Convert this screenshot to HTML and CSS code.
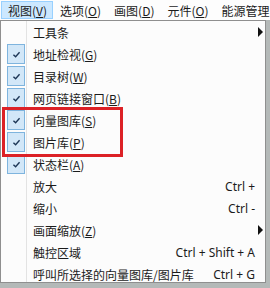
FILE: index.html
```html
<!DOCTYPE html>
<html lang="zh-CN">
<head>
    <meta charset="UTF-8">
    <title>视图菜单</title>
    <link rel="stylesheet" href="styles.css">
</head>
<body>
    <div class="menubar">
        <div class="menu-item active">视图(<u>V</u>)</div>
        <div class="menu-item">选项(<u>O</u>)</div>
        <div class="menu-item">画图(<u>D</u>)</div>
        <div class="menu-item">元件(<u>O</u>)</div>
        <div class="menu-item">能源管理</div>
    </div>
    <div class="dropdown">
        <div class="row"><span class="check"></span><span class="label">工具条</span><span class="arrow"></span></div>
        <div class="row"><span class="check on"><svg viewBox="0 0 10 8"><path d="M1.5 4.2 L4 6.5 L8.5 1.5" /></svg></span><span class="label">地址检视(<u>G</u>)</span></div>
        <div class="row"><span class="check on"><svg viewBox="0 0 10 8"><path d="M1.5 4.2 L4 6.5 L8.5 1.5" /></svg></span><span class="label">目录树(<u>W</u>)</span></div>
        <div class="row"><span class="check on"><svg viewBox="0 0 10 8"><path d="M1.5 4.2 L4 6.5 L8.5 1.5" /></svg></span><span class="label">网页链接窗口(<u>B</u>)</span></div>
        <div class="row"><span class="check on"><svg viewBox="0 0 10 8"><path d="M1.5 4.2 L4 6.5 L8.5 1.5" /></svg></span><span class="label">向量图库(<u>S</u>)</span></div>
        <div class="row"><span class="check on"><svg viewBox="0 0 10 8"><path d="M1.5 4.2 L4 6.5 L8.5 1.5" /></svg></span><span class="label">图片库(<u>P</u>)</span></div>
        <div class="row"><span class="check on"><svg viewBox="0 0 10 8"><path d="M1.5 4.2 L4 6.5 L8.5 1.5" /></svg></span><span class="label">状态栏(<u>A</u>)</span></div>
        <div class="row"><span class="check"></span><span class="label">放大</span><span class="key">Ctrl +</span></div>
        <div class="row"><span class="check"></span><span class="label">缩小</span><span class="key">Ctrl -</span></div>
        <div class="row"><span class="check"></span><span class="label">画面缩放(<u>Z</u>)</span><span class="arrow"></span></div>
        <div class="row"><span class="check"></span><span class="label">触控区域</span><span class="key">Ctrl + Shift + A</span></div>
        <div class="row"><span class="check"></span><span class="label">呼叫所选择的向量图库/图片库</span><span class="key">Ctrl + G</span></div>
        <div class="highlight"></div>
    </div>
</body>
</html>
```

FILE: styles.css
```css
body {
    margin: 0;
    width: 270px;
    height: 288px;
    overflow: hidden;
    background: #b4b9b8;
    font-family: "Noto Sans CJK SC", "Noto Sans", sans-serif;
    font-size: 12px;
    color: #1b1b1b;
}
u {
    text-decoration-thickness: 1px;
    text-underline-offset: 1px;
}
.menubar {
    display: flex;
    height: 20px;
    padding-left: 1px;
    background: #fdfdfd;
    overflow: hidden;
}
.menu-item {
    display: flex;
    align-items: center;
    padding: 0 5px 0 6px;
    margin-top: 1px;
    height: 18px;
    border: 1px solid transparent;
    box-sizing: border-box;
    white-space: nowrap;
}
.menu-item.active {
    background: #cce8ff;
    border-color: #99d1ff;
}
.dropdown {
    position: relative;
    width: 266px;
    height: 263px;
    box-sizing: border-box;
    border: 1px solid #8f8f8f;
    background: linear-gradient(to right, transparent 25px, #e3e3e3 25px, #e3e3e3 26px, transparent 26px), #fcfcfc;
}
.row {
    display: flex;
    align-items: center;
    height: 22px;
    padding-right: 2px;
}
.check {
    flex: none;
    display: flex;
    align-items: center;
    justify-content: center;
    width: 18px;
    height: 20px;
    margin: 0 8px 0 6px;
    box-sizing: border-box;
}
.check.on {
    background: #d2e7f8;
    border: 1px solid #7eb4de;
}
.check svg {
    width: 9px;
    height: 7px;
}
.check path {
    fill: none;
    stroke: #1d3656;
    stroke-width: 1.6;
}
.label {
    flex: 1;
    white-space: nowrap;
}
.key {
    margin-right: 8px;
    font-family: "Noto Sans", sans-serif;
    white-space: nowrap;
}
.arrow {
    width: 0;
    height: 0;
    border-top: 5px solid transparent;
    border-bottom: 5px solid transparent;
    border-left: 5px solid #111;
}
.highlight {
    position: absolute;
    left: 1px;
    top: 86px;
    width: 121px;
    height: 50px;
    box-sizing: border-box;
    border: 3px solid #dc2126;
}
```
